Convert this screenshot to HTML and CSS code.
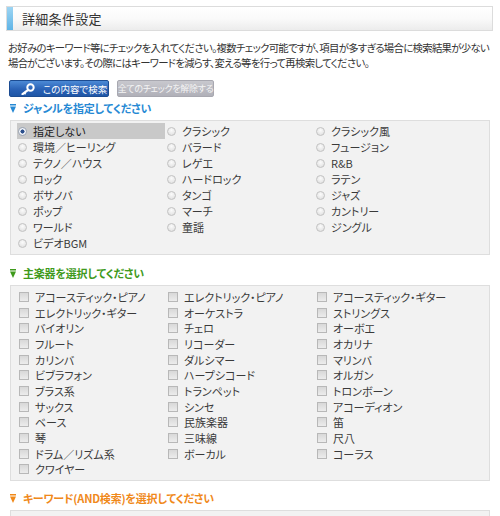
FILE: index.html
```html
<!DOCTYPE html>
<html lang="ja">
<head>
<meta charset="utf-8">
<title>詳細条件設定</title>
<link rel="stylesheet" href="styles.css">
</head>
<body>
<div class="page">
  <div class="title-box"><span class="title-bar"></span><h1 class="title">詳細条件設定</h1></div>
  <p class="desc">お好みのキーワード等にチェックを入れてください。複数チェック可能ですが、項目が多すぎる場合に検索結果が少ない<br>場合がございます。その際にはキーワードを減らす、変える等を行って再検索してください。</p>
  <div class="buttons">
    <button class="btn btn-search"><svg class="key" viewBox="0 0 14 12" width="14" height="12"><circle cx="9.5" cy="4.5" r="3.2" fill="none" stroke="#fff" stroke-width="2"/><path d="M7.2 6.8 L1.5 11.2" stroke="#fff" stroke-width="2.2" stroke-linecap="round"/><path d="M3.2 9.8 L4.6 11.3" stroke="#fff" stroke-width="1.6"/></svg>この内容で検索</button>
    <button class="btn btn-clear">全てのチェックを解除する</button>
  </div>

  <h2 class="sec sec-blue"><svg class="arrow" viewBox="0 0 6 9" width="6" height="9"><rect x="0" y="0" width="6" height="1.5" fill="currentColor"/><path d="M0 2.5 H6 L3 9 Z" fill="currentColor"/></svg>ジャンルを指定してください</h2>
  <div class="panel panel-genre">
    <label class="opt selected"><input type="radio" name="g" checked><span>指定しない</span></label>
    <label class="opt"><input type="radio" name="g"><span>クラシック</span></label>
    <label class="opt"><input type="radio" name="g"><span>クラシック風</span></label>
    <label class="opt"><input type="radio" name="g"><span>環境／ヒーリング</span></label>
    <label class="opt"><input type="radio" name="g"><span>バラード</span></label>
    <label class="opt"><input type="radio" name="g"><span>フュージョン</span></label>
    <label class="opt"><input type="radio" name="g"><span>テクノ／ハウス</span></label>
    <label class="opt"><input type="radio" name="g"><span>レゲエ</span></label>
    <label class="opt"><input type="radio" name="g"><span>R&amp;B</span></label>
    <label class="opt"><input type="radio" name="g"><span>ロック</span></label>
    <label class="opt"><input type="radio" name="g"><span>ハードロック</span></label>
    <label class="opt"><input type="radio" name="g"><span>ラテン</span></label>
    <label class="opt"><input type="radio" name="g"><span>ボサノバ</span></label>
    <label class="opt"><input type="radio" name="g"><span>タンゴ</span></label>
    <label class="opt"><input type="radio" name="g"><span>ジャズ</span></label>
    <label class="opt"><input type="radio" name="g"><span>ポップ</span></label>
    <label class="opt"><input type="radio" name="g"><span>マーチ</span></label>
    <label class="opt"><input type="radio" name="g"><span>カントリー</span></label>
    <label class="opt"><input type="radio" name="g"><span>ワールド</span></label>
    <label class="opt"><input type="radio" name="g"><span>童謡</span></label>
    <label class="opt"><input type="radio" name="g"><span>ジングル</span></label>
    <label class="opt"><input type="radio" name="g"><span>ビデオBGM</span></label>
  </div>

  <h2 class="sec sec-green"><svg class="arrow" viewBox="0 0 6 9" width="6" height="9"><rect x="0" y="0" width="6" height="1.5" fill="currentColor"/><path d="M0 2.5 H6 L3 9 Z" fill="currentColor"/></svg>主楽器を選択してください</h2>
  <div class="panel panel-inst">
    <label class="opt"><input type="checkbox"><span>アコースティック・ピアノ</span></label>
    <label class="opt"><input type="checkbox"><span>エレクトリック・ピアノ</span></label>
    <label class="opt"><input type="checkbox"><span>アコースティック・ギター</span></label>
    <label class="opt"><input type="checkbox"><span>エレクトリック・ギター</span></label>
    <label class="opt"><input type="checkbox"><span>オーケストラ</span></label>
    <label class="opt"><input type="checkbox"><span>ストリングス</span></label>
    <label class="opt"><input type="checkbox"><span>バイオリン</span></label>
    <label class="opt"><input type="checkbox"><span>チェロ</span></label>
    <label class="opt"><input type="checkbox"><span>オーボエ</span></label>
    <label class="opt"><input type="checkbox"><span>フルート</span></label>
    <label class="opt"><input type="checkbox"><span>リコーダー</span></label>
    <label class="opt"><input type="checkbox"><span>オカリナ</span></label>
    <label class="opt"><input type="checkbox"><span>カリンバ</span></label>
    <label class="opt"><input type="checkbox"><span>ダルシマー</span></label>
    <label class="opt"><input type="checkbox"><span>マリンバ</span></label>
    <label class="opt"><input type="checkbox"><span>ビブラフォン</span></label>
    <label class="opt"><input type="checkbox"><span>ハープシコード</span></label>
    <label class="opt"><input type="checkbox"><span>オルガン</span></label>
    <label class="opt"><input type="checkbox"><span>ブラス系</span></label>
    <label class="opt"><input type="checkbox"><span>トランペット</span></label>
    <label class="opt"><input type="checkbox"><span>トロンボーン</span></label>
    <label class="opt"><input type="checkbox"><span>サックス</span></label>
    <label class="opt"><input type="checkbox"><span>シンセ</span></label>
    <label class="opt"><input type="checkbox"><span>アコーディオン</span></label>
    <label class="opt"><input type="checkbox"><span>ベース</span></label>
    <label class="opt"><input type="checkbox"><span>民族楽器</span></label>
    <label class="opt"><input type="checkbox"><span>笛</span></label>
    <label class="opt"><input type="checkbox"><span>琴</span></label>
    <label class="opt"><input type="checkbox"><span>三味線</span></label>
    <label class="opt"><input type="checkbox"><span>尺八</span></label>
    <label class="opt"><input type="checkbox"><span>ドラム／リズム系</span></label>
    <label class="opt"><input type="checkbox"><span>ボーカル</span></label>
    <label class="opt"><input type="checkbox"><span>コーラス</span></label>
    <label class="opt"><input type="checkbox"><span>クワイヤー</span></label>
  </div>

  <h2 class="sec sec-orange"><svg class="arrow" viewBox="0 0 6 9" width="6" height="9"><rect x="0" y="0" width="6" height="1.5" fill="currentColor"/><path d="M0 2.5 H6 L3 9 Z" fill="currentColor"/></svg>キーワード(AND検索)を選択してください</h2>
  <div class="panel panel-kw"></div>
</div>
</body>
</html>
```
FILE: styles.css
```css
* { box-sizing: border-box; }
html, body { margin: 0; padding: 0; background: #fff; }
body {
  font-family: "Noto Sans CJK JP", "Noto Sans", sans-serif;
  font-size: 11px;
  color: #333;
  font-feature-settings: "palt";
  overflow: hidden;
}
.page { padding: 6px 7px 0 6px; }

.title-box {
  display: flex;
  align-items: center;
  height: 25px;
  border: 1px solid #dcdcdc;
  background: linear-gradient(#ffffff 0%, #fafafa 50%, #ececec 100%);
}
.title-bar {
  align-self: stretch;
  width: 6px;
  background: linear-gradient(#9dd5f3, #5fb4e6);
}
.title {
  margin: 0 0 0 9px;
  font-size: 13px;
  font-weight: normal;
  color: #333;
  letter-spacing: 0.3px;
}

.desc {
  margin: 9px 0 0 2px;
  line-height: 15px;
  font-size: 10.4px;
  letter-spacing: -0.7px;
  color: #333;
}

.buttons {
  display: flex;
  gap: 8px;
  margin: 10px 0 0 3px;
}
.btn {
  height: 17px;
  border: 0;
  border-radius: 2px;
  padding: 0;
  font-family: inherit;
  font-size: 9.5px;
  color: #fff;
  display: flex;
  align-items: center;
  white-space: nowrap;
  font-feature-settings: "palt";
}
.btn-search {
  width: 100px;
  background: linear-gradient(#4c8ad6, #2a62b6 55%, #1f56a6);
  border: 1px solid #1c4c92;
  padding-left: 11px;
  gap: 8px;
}
.key { flex: none; }
.btn-clear {
  width: 97px;
  justify-content: center;
  font-size: 9px;
  letter-spacing: -0.3px;
  background: linear-gradient(#c8c8ce, #b0b0b8);
  border: 1px solid #a8a8b0;
  color: #f4f4f4;
}

.sec {
  display: flex;
  align-items: center;
  gap: 7px;
  margin: 4px 0 0 4px;
  height: 14px;
  font-size: 11px;
  font-weight: bold;
  letter-spacing: -0.2px;
}
.arrow { flex: none; }
.sec-blue { color: #2689d4; }
.sec-green { color: #3f9a1c; margin-top: 11px; }
.sec-orange { color: #f0891a; margin-top: 10px; }

.panel {
  margin: 5px 3px 0 4px;
  border: 1px solid #dedede;
  background: #f2f2f2;
  display: grid;
  grid-template-columns: 149px 149px 149px;
  padding: 2px 6px 3px 6px;
}
.panel-inst { padding: 3px 6px 3px 6px; }
.panel-inst .opt { height: 15.7px; }
.panel-kw { margin-top: 5px; height: 30px; }

.opt {
  display: flex;
  align-items: center;
  height: 16px;
  gap: 6px;
  padding-left: 1px;
  margin-right: 1px;
  white-space: nowrap;
  color: #3a3a3a;
  font-size: 11px;
}
.opt.selected { background: #c9c9c9; color: #222; }

.opt input {
  -webkit-appearance: none;
  appearance: none;
  margin: 0;
  flex: none;
}
.opt input[type="radio"] {
  width: 9px;
  height: 9px;
  border-radius: 50%;
  border: 1px solid #c2c2c2;
  background: radial-gradient(circle at 50% 35%, #fbfbfb, #dcdcdc);
}
.opt input[type="radio"]:checked {
  border-color: #9aa4b4;
  background: radial-gradient(circle, #2b4f8c 0 1.8px, #f2f4f8 2.3px);
}
.opt input[type="checkbox"] {
  width: 10px;
  height: 10px;
  margin-left: 1px;
  border: 1px solid #b8b8b8;
  background: linear-gradient(#d8d8d8, #ececec);
}
```
